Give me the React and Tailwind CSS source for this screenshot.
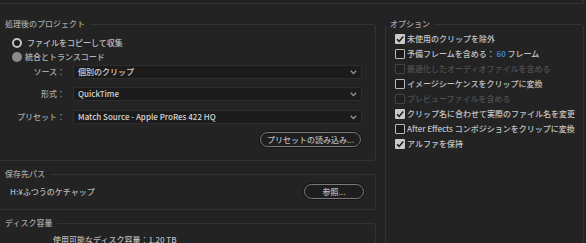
import React from "react";

function Chevron() {
  return (
    <svg width="7" height="5" viewBox="0 0 7 5" className="shrink-0">
      <polyline points="0.8,0.8 3.5,3.6 6.2,0.8" fill="none" stroke="#9a9a9a" strokeWidth="1.3" />
    </svg>
  );
}

function Select({ value }) {
  return (
    <div className="h-[14px] w-[289px] flex items-center justify-between bg-[#1b1b1b] border border-[#2e2e2e] rounded-[2px] pl-[4px] pr-[4px] text-[#d6d6d6]">
      <span className="leading-[12px]">{value}</span>
      <Chevron />
    </div>
  );
}

function Row({ label, value, className }) {
  return (
    <div className={"flex items-center " + (className || "")}>
      <div className="w-[65px] text-right text-[#a9a9a9] leading-[12px]">{label}</div>
      <div className="ml-[8px]">
        <Select value={value} />
      </div>
    </div>
  );
}

function Check({ state, children }) {
  let box;
  if (state === "on") {
    box = (
      <div className="w-[10px] h-[10px] bg-[#c9c9c9] rounded-[1px] flex items-center justify-center shrink-0">
        <svg width="10" height="10" viewBox="0 0 10 10">
          <path d="M2 5.2 L4.2 7.4 L8.2 2.6" fill="none" stroke="#1e1e1e" strokeWidth="1.6" />
        </svg>
      </div>
    );
  } else if (state === "off") {
    box = <div className="w-[10px] h-[10px] border-[1.5px] border-[#b9b9b9] bg-[#1a1a1a] rounded-[1px] shrink-0" />;
  } else {
    box = <div className="w-[10px] h-[10px] border-[1.5px] border-[#444444] bg-[#1f1f1f] rounded-[1px] shrink-0" />;
  }
  return (
    <div className="h-[15px] flex items-center gap-[2px]">
      {box}
      <span className={"leading-[12px] whitespace-nowrap " + (state === "dis" ? "text-[#505050]" : "text-[#c4c4c4]")}>
        {children}
      </span>
    </div>
  );
}

function PillButton({ children, className }) {
  return (
    <div className={"h-[15px] rounded-full border border-[#7a7a7a] bg-[#1e1e1e] flex items-center justify-center text-[#bdbdbd] leading-[12px] shadow-[0_0_0_1px_#161616] " + (className || "")}>
      {children}
    </div>
  );
}

export default function App() {
  return (
    <div className="w-[586px] h-[243px] overflow-hidden bg-[#232323] text-[8px] font-['Noto_Sans_CJK_JP','Noto_Sans',sans-serif] font-medium">
      <div className="h-[4px] w-[584px] border-b border-r border-[#333333] rounded-br-[3px]" />
      <div className="flex">
        {/* left column */}
        <div className="w-[376px] flex flex-col">
          <fieldset className="mt-[14px] border border-l-0 border-[#333333] rounded-r-[3px] pb-[13px]">
            <legend className="pl-[5px] pr-[5px] leading-[12px] text-[#a3a3a3]">処理後のプロジェクト</legend>
            <div className="pt-[6px] pl-[12px] flex flex-col">
              <div className="h-[14px] flex items-center gap-[5px]">
                <div className="w-[10px] h-[10px] rounded-full border-[2px] border-[#c2c2c2] bg-[#1b1b1b]" />
                <span className="text-[#c0c0c0] leading-[12px]">ファイルをコピーして収集</span>
              </div>
              <div className="h-[14px] flex items-center gap-[3px]">
                <div className="w-[10px] h-[10px] rounded-full bg-[#8c8c8c]" />
                <span className="text-[#b3b3b3] leading-[12px]">統合とトランスコード</span>
              </div>
            </div>
            <Row label="ソース：" value="個別のクリップ" className="mt-[1px]" />
            <Row label="形式：" value="QuickTime" className="mt-[8px]" />
            <Row label="プリセット：" value="Match Source - Apple ProRes 422 HQ" className="mt-[9px]" />
            <div className="flex justify-end pr-[14px] mt-[8px]">
              <PillButton className="w-[101px]">プリセットの読み込み...</PillButton>
            </div>
          </fieldset>

          <fieldset className="mt-[7px] border border-l-0 border-[#333333] rounded-r-[3px] pb-[10px]">
            <legend className="pl-[5px] pr-[5px] leading-[12px] text-[#a3a3a3]">保存先パス</legend>
            <div className="pt-[4px] flex items-center justify-between pl-[10px] pr-[11px]">
              <span className="text-[#b8b8b8] leading-[12px]">H:¥ふつうのケチャップ</span>
              <PillButton className="w-[60px]">参照...</PillButton>
            </div>
          </fieldset>

          <fieldset className="mt-[7px] border border-l-0 border-[#333333] rounded-r-[3px] pb-[20px]">
            <legend className="pl-[5px] pr-[5px] leading-[12px] text-[#a3a3a3]">ディスク容量</legend>
            <div className="pt-[5px] pl-[53px] text-[#b8b8b8] leading-[12px]">使用可能なディスク容量：1.20 TB</div>
          </fieldset>
        </div>

        {/* right column */}
        <div className="ml-[9px] w-[199px]">
          <fieldset className="mt-[14px] border border-[#333333] rounded-[3px] h-[260px]">
            <legend className="ml-[0px] px-[4px] leading-[12px] text-[#a3a3a3]">オプション</legend>
            <div className="pt-[1px] pl-[9px] flex flex-col">
              <Check state="on">未使用のクリップを除外</Check>
              <Check state="off">
                予備フレームを含める：<span className="text-[#3a8ee6]"> 60 </span>フレーム
              </Check>
              <Check state="dis">最適化したオーディオファイルを含める</Check>
              <Check state="off">イメージシーケンスをクリップに変換</Check>
              <Check state="dis">プレビューファイルを含める</Check>
              <Check state="on">クリップ名に合わせて実際のファイル名を変更</Check>
              <Check state="off">After Effects コンポジションをクリップに変換</Check>
              <Check state="on">アルファを保持</Check>
            </div>
          </fieldset>
        </div>
      </div>
    </div>
  );
}
